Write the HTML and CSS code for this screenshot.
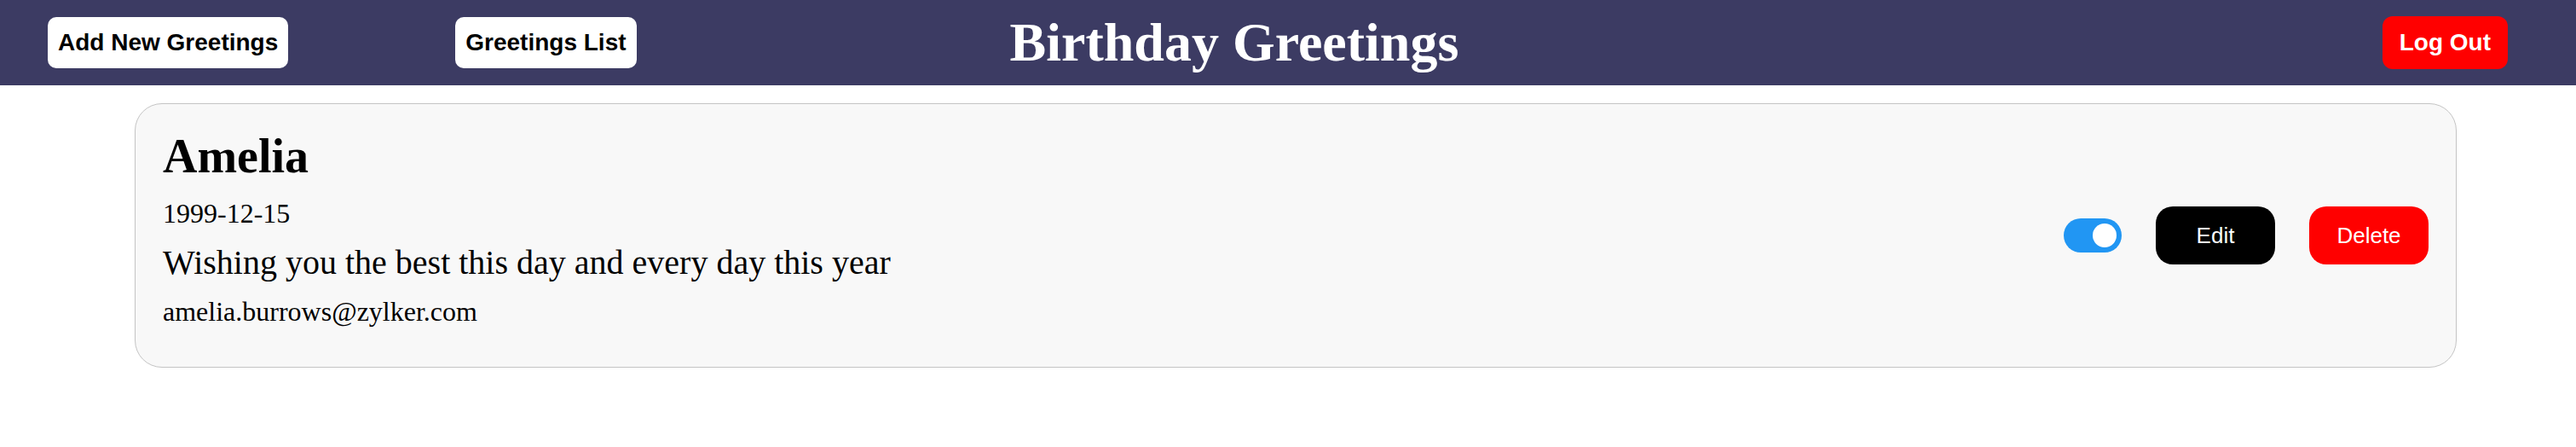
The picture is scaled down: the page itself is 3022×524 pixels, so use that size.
FILE: index.html
```html
<!DOCTYPE html>
<html lang="en">
  <head>
    <meta charset="UTF-8" />
    <meta name="viewport" content="width=device-width, initial-scale=1.0" />
    <title>Birthday Greetings</title>
    <link rel="stylesheet" href="styles.css">
  </head>
  <body>
    <header class="topbar">
      <nav class="nav">
        <button class="nav-btn">Add New Greetings</button>
        <button class="nav-btn">Greetings List</button>
      </nav>
      <h1 class="title">Birthday Greetings</h1>
      <button class="logout-btn">Log Out</button>
    </header>

    <main class="list">
      <div class="card">
        <div class="card-info">
          <h2 class="card-name">Amelia</h2>
          <p class="card-date">1999-12-15</p>
          <p class="card-message">Wishing you the best this day and every day this year</p>
          <p class="card-email">amelia.burrows@zylker.com</p>
        </div>
        <div class="card-actions">
          <span class="switch on"><span class="knob"></span></span>
          <button class="edit-btn">Edit</button>
          <button class="delete-btn">Delete</button>
        </div>
      </div>
    </main>
  </body>
</html>
```

FILE: styles.css
```css
body {
  margin: 0;
  background: #fff;
  font-family: "Liberation Serif", "Times New Roman", serif;
  color: #000;
}

.topbar {
  display: flex;
  align-items: center;
  height: 100px;
  padding: 0 80px 0 56px;
  background: #3c3b63;
}

.nav {
  display: flex;
  gap: 196px;
}

.nav-btn {
  height: 60px;
  padding: 0 12px;
  border: none;
  border-radius: 10px;
  background: #fff;
  color: #000;
  font-family: "Liberation Sans", Arial, sans-serif;
  font-weight: bold;
  font-size: 28px;
  cursor: pointer;
}

.title {
  margin: 0 0 0 438px;
  color: #fff;
  font-size: 64px;
  font-weight: bold;
  line-height: 74px;
}

.logout-btn {
  margin-left: auto;
  height: 62px;
  padding: 0 20px;
  border: none;
  border-radius: 12px;
  background: #ff0000;
  color: #fff;
  font-family: "Liberation Sans", Arial, sans-serif;
  font-weight: bold;
  font-size: 28px;
  cursor: pointer;
}

.card {
  display: flex;
  align-items: center;
  justify-content: space-between;
  margin: 21px 140px 0 158px;
  padding: 29px 32px;
  border: 1px solid #c4c4c4;
  border-radius: 32px;
  background: #f8f8f8;
}

.card-info {
  padding-bottom: 16px;
}

.card-name {
  margin: 0;
  font-size: 56px;
  font-weight: bold;
  line-height: 64px;
}

.card-date {
  margin: 15px 0 0;
  font-size: 32px;
  line-height: 40px;
}

.card-message {
  margin: 14px 0 0;
  font-size: 40px;
  line-height: 48px;
}

.card-email {
  margin: 13px 0 0;
  font-size: 32px;
  line-height: 40px;
}

.card-actions {
  display: flex;
  align-items: center;
  gap: 40px;
}

.switch {
  display: flex;
  align-items: center;
  justify-content: flex-end;
  box-sizing: border-box;
  width: 68px;
  height: 40px;
  padding: 0 6px;
  border-radius: 20px;
  background: #ccc;
}

.switch.on {
  background: #2196f3;
}

.knob {
  width: 28px;
  height: 28px;
  border-radius: 50%;
  background: #fff;
}

.edit-btn,
.delete-btn {
  width: 140px;
  height: 68px;
  padding: 0;
  border: none;
  border-radius: 20px;
  color: #fff;
  font-family: "Liberation Sans", Arial, sans-serif;
  font-size: 26px;
  cursor: pointer;
}

.edit-btn {
  background: #000;
}

.delete-btn {
  background: #ff0000;
}
```
